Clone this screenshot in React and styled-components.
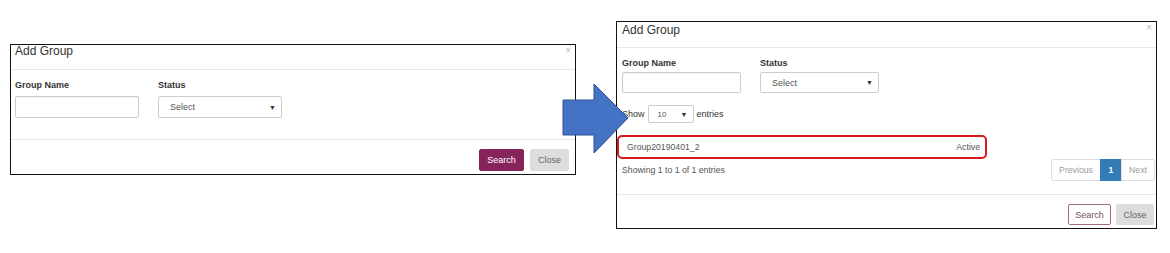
import React from "react";
import styled, { createGlobalStyle } from "styled-components";

const Global = createGlobalStyle`
  html, body { margin: 0; padding: 0; background: #fff; }
  body { font-family: "Liberation Sans", Arial, sans-serif; }
  * { box-sizing: border-box; }
`;

const Canvas = styled.div`
  position: relative;
  width: 1170px;
  height: 253px;
  display: flex;
  align-items: flex-start;
  gap: 40px;
  padding-left: 10px;
  background: #fff;
  overflow: hidden;
`;

const Panel = styled.section`
  width: ${(p) => p.$w}px;
  margin-top: ${(p) => p.$top}px;
  border: 1px solid #111;
  background: #fff;
  display: flex;
  flex-direction: column;
  color: #333;
`;

const Header = styled.header`
  display: flex;
  justify-content: space-between;
  align-items: flex-start;
  height: ${(p) => p.$h}px;
  padding: 0 4px 0 ${(p) => p.$pl}px;
  border-bottom: 1px solid #e8e8e8;
`;

const Title = styled.h4`
  margin: 0;
  padding-top: ${(p) => p.$pt || 0}px;
  font-size: 12px;
  line-height: 12px;
  font-weight: normal;
  color: #333;
`;

const Dismiss = styled.span`
  margin-top: 2px;
  font-size: 10px;
  line-height: 8px;
  color: #bbb;
`;

const Body = styled.div`
  display: flex;
  flex-direction: column;
  padding: 10px ${(p) => p.$pr}px ${(p) => p.$pb}px ${(p) => p.$pl}px;
`;

const FieldsRow = styled.div`
  display: flex;
  gap: 19px;
`;

const Field = styled.div`
  display: flex;
  flex-direction: column;
  width: ${(p) => p.$w}px;
`;

const Label = styled.label`
  font-size: 9px;
  line-height: 11px;
  font-weight: bold;
  color: #333;
  margin-bottom: ${(p) => p.$gap}px;
`;

const TextInput = styled.div`
  height: ${(p) => p.$h}px;
  border: 1px solid #ccc;
  border-radius: 2px;
  background: #fff;
  box-shadow: inset 0 1px 1px rgba(0, 0, 0, 0.06);
`;

const SelectBox = styled.div`
  display: flex;
  align-items: center;
  justify-content: space-between;
  height: ${(p) => p.$h}px;
  width: ${(p) => (p.$w ? `${p.$w}px` : "auto")};
  padding: 0 5px 0 ${(p) => p.$pl}px;
  border: 1px solid #ccc;
  border-radius: 2px;
  background: #fff;
  font-size: ${(p) => p.$fs}px;
  color: #555;
`;

const Caret = styled.span`
  font-size: 7px;
  color: #333;
`;

const LengthRow = styled.div`
  display: flex;
  align-items: center;
  gap: 3px;
  margin-top: 12px;
  font-size: 9px;
  color: #333;
`;

const ResultRow = styled.div`
  display: flex;
  align-items: center;
  justify-content: space-between;
  width: 370px;
  height: 24px;
  margin: 12px 0 0 -5px;
  padding: 0 5px 0 8px;
  border: 2px solid #d71920;
  border-radius: 5px;
  font-size: 8.7px;
  color: #555;
`;

const InfoRow = styled.div`
  display: flex;
  align-items: center;
  justify-content: space-between;
  font-size: 8.7px;
  color: #555;
`;

const Pager = styled.ul`
  display: flex;
  margin: 0;
  padding: 0;
  list-style: none;
  height: 22px;
`;

const PageItem = styled.li`
  display: flex;
  align-items: center;
  justify-content: center;
  width: ${(p) => p.$w}px;
  border: 1px solid ${(p) => (p.$active ? "#337ab7" : "#ddd")};
  margin-left: -1px;
  font-size: 8.7px;
  background: ${(p) => (p.$active ? "#337ab7" : "#fff")};
  color: ${(p) => (p.$active ? "#fff" : "#999")};
  font-weight: ${(p) => (p.$active ? "bold" : "normal")};
  &:first-child { border-radius: 2px 0 0 2px; margin-left: 0; }
  &:last-child { border-radius: 0 2px 2px 0; }
`;

const Footer = styled.footer`
  display: flex;
  justify-content: flex-end;
  gap: ${(p) => p.$gap}px;
  padding: 9px ${(p) => p.$pr}px 3px 0;
  border-top: 1px solid #e8e8e8;
`;

const variants = {
  primary: "background:#86235a;border-color:#86235a;color:#fff;",
  outline: "background:#fff;border-color:#a26a88;color:#7d4a66;",
  plain: "background:#ddd;border-color:#ddd;color:#666;",
};

const Button = styled.button`
  height: ${(p) => p.$h}px;
  width: ${(p) => p.$w}px;
  padding: 0;
  border: 1px solid;
  border-radius: 2px;
  font-family: "Liberation Sans", Arial, sans-serif;
  font-size: 9px;
  ${(p) => variants[p.$variant]}
`;

const Arrow = styled.svg`
  position: absolute;
  left: 562px;
  top: 82px;
  z-index: 2;
`;

export default function App() {
  return (
    <>
      <Global />
      <Canvas>
        <Panel $w={566} $top={44}>
          <Header $h={25} $pl={4}>
            <Title>Add Group</Title>
            <Dismiss>×</Dismiss>
          </Header>
          <Body $pl={4} $pr={4} $pb={21}>
            <FieldsRow>
              <Field $w={124}>
                <Label $gap={5}>Group Name</Label>
                <TextInput $h={22} />
              </Field>
              <Field $w={124}>
                <Label $gap={5}>Status</Label>
                <SelectBox $h={22} $pl={11} $fs={9}>
                  <span>Select</span>
                  <Caret>▼</Caret>
                </SelectBox>
              </Field>
            </FieldsRow>
          </Body>
          <Footer $gap={6} $pr={6}>
            <Button $variant="primary" $h={22} $w={45}>Search</Button>
            <Button $variant="plain" $h={22} $w={39}>Close</Button>
          </Footer>
        </Panel>

        <Panel $w={541} $top={21}>
          <Header $h={26} $pl={5}>
            <Title $pt={2}>Add Group</Title>
            <Dismiss>×</Dismiss>
          </Header>
          <Body $pl={5} $pr={1} $pb={13}>
            <FieldsRow>
              <Field $w={119}>
                <Label $gap={3}>Group Name</Label>
                <TextInput $h={21} />
              </Field>
              <Field $w={119}>
                <Label $gap={3}>Status</Label>
                <SelectBox $h={21} $pl={11} $fs={9}>
                  <span>Select</span>
                  <Caret>▼</Caret>
                </SelectBox>
              </Field>
            </FieldsRow>
            <LengthRow>
              <span>Show</span>
              <SelectBox $h={18} $w={46} $pl={9} $fs={8}>
                <span>10</span>
                <Caret>▼</Caret>
              </SelectBox>
              <span>entries</span>
            </LengthRow>
            <ResultRow>
              <span>Group20190401_2</span>
              <span>Active</span>
            </ResultRow>
            <InfoRow>
              <span>Showing 1 to 1 of 1 entries</span>
              <Pager>
                <PageItem $w={50}>Previous</PageItem>
                <PageItem $w={22} $active>1</PageItem>
                <PageItem $w={34}>Next</PageItem>
              </Pager>
            </InfoRow>
          </Body>
          <Footer $gap={5} $pr={2}>
            <Button $variant="outline" $h={21} $w={43}>Search</Button>
            <Button $variant="plain" $h={21} $w={38}>Close</Button>
          </Footer>
        </Panel>

        <Arrow width="68" height="74" viewBox="0 0 68 74">
          <polygon
            points="1,18 32,18 32,2 66,36 32,71 32,53 1,53"
            fill="#4472c4"
            stroke="#2f528f"
            strokeWidth="1"
          />
        </Arrow>
      </Canvas>
    </>
  );
}
